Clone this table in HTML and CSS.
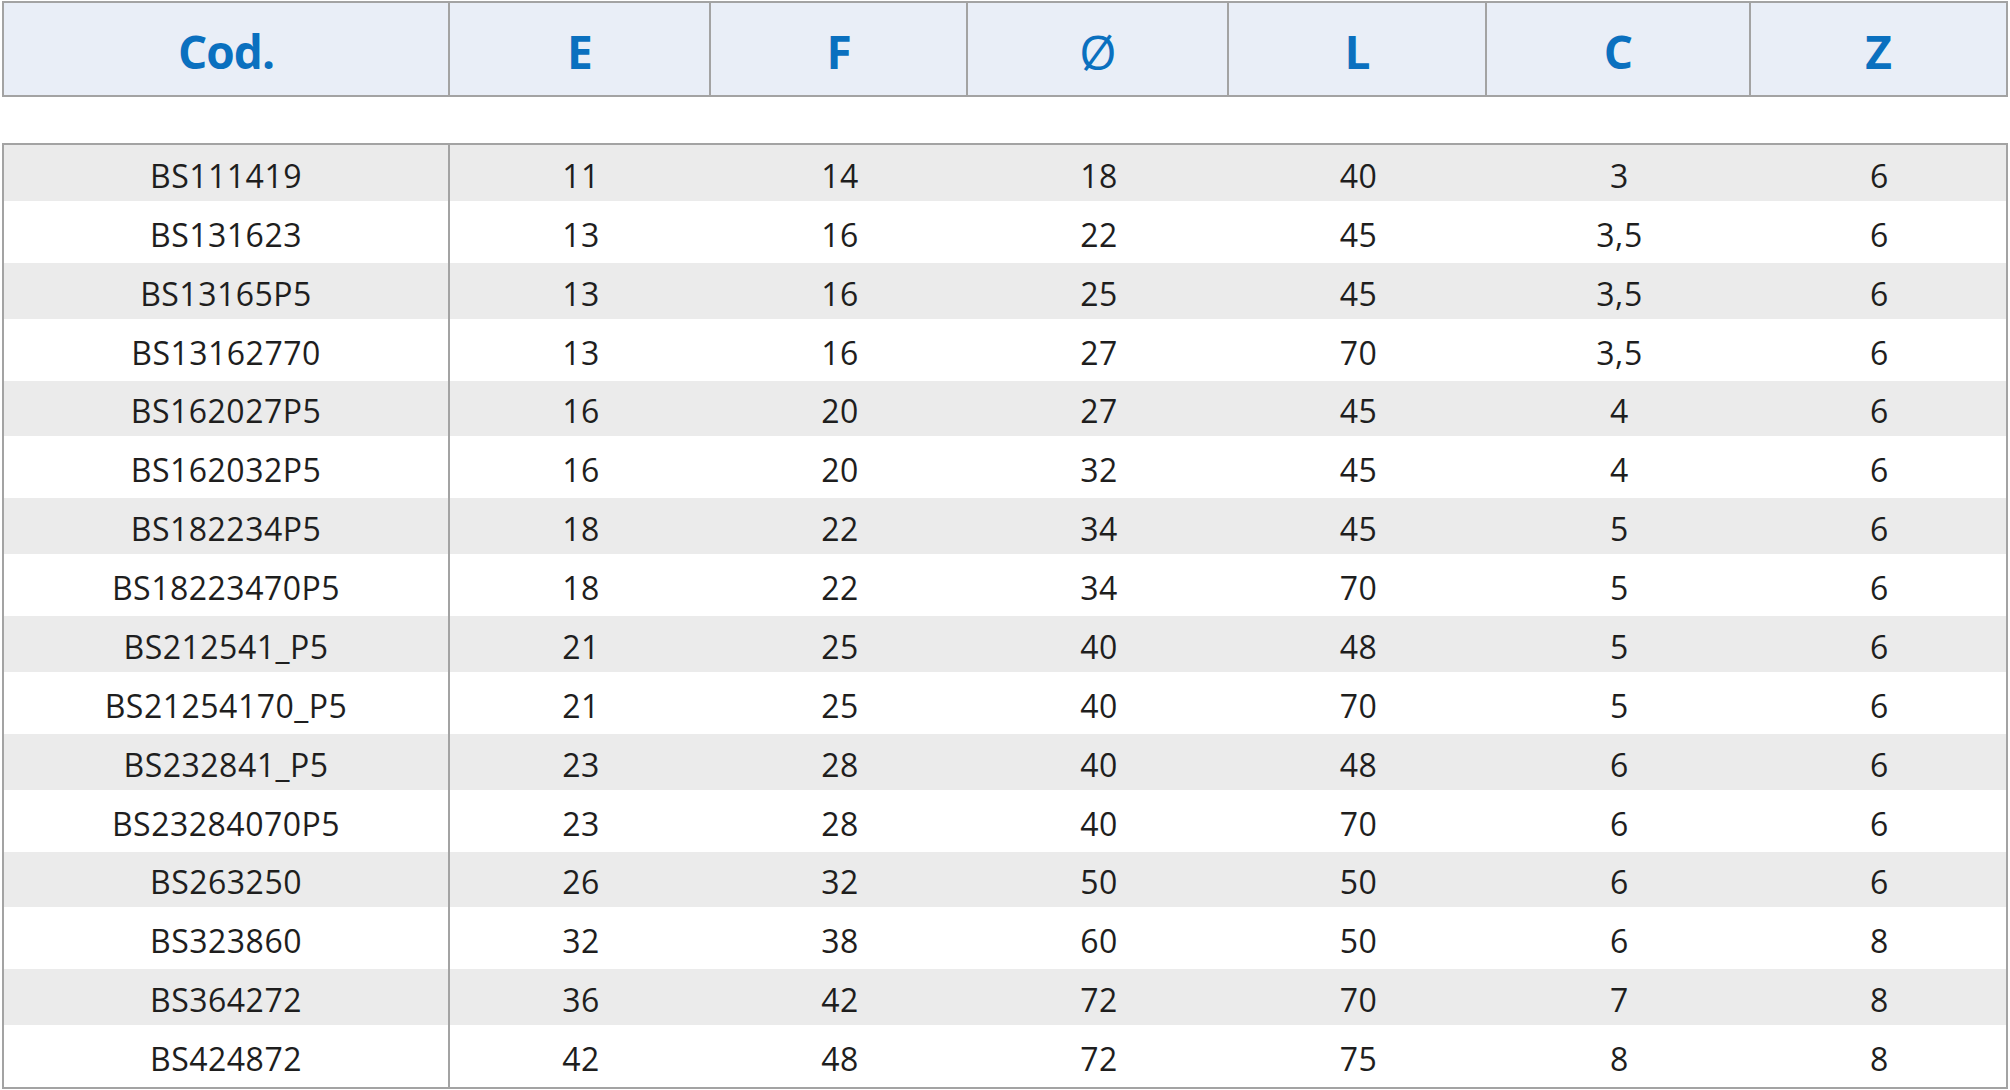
FILE: index.html
```html
<!DOCTYPE html>
<html lang="it">
<head>
<meta charset="utf-8">
<title>Tabella BS</title>
<link rel="stylesheet" href="styles.css">
</head>
<body>
<div class="page">
  <div class="head">
    <div class="hc">Cod.</div>
    <div class="hc">E</div>
    <div class="hc">F</div>
    <div class="hc hc-thin">Ø</div>
    <div class="hc">L</div>
    <div class="hc">C</div>
    <div class="hc">Z</div>
  </div>
  <div class="body">
    <div class="row alt"><div class="c code">BS111419</div><div class="c">11</div><div class="c">14</div><div class="c">18</div><div class="c">40</div><div class="c">3</div><div class="c">6</div></div>
    <div class="row"><div class="c code">BS131623</div><div class="c">13</div><div class="c">16</div><div class="c">22</div><div class="c">45</div><div class="c">3,5</div><div class="c">6</div></div>
    <div class="row alt"><div class="c code">BS13165P5</div><div class="c">13</div><div class="c">16</div><div class="c">25</div><div class="c">45</div><div class="c">3,5</div><div class="c">6</div></div>
    <div class="row"><div class="c code">BS13162770</div><div class="c">13</div><div class="c">16</div><div class="c">27</div><div class="c">70</div><div class="c">3,5</div><div class="c">6</div></div>
    <div class="row alt"><div class="c code">BS162027P5</div><div class="c">16</div><div class="c">20</div><div class="c">27</div><div class="c">45</div><div class="c">4</div><div class="c">6</div></div>
    <div class="row"><div class="c code">BS162032P5</div><div class="c">16</div><div class="c">20</div><div class="c">32</div><div class="c">45</div><div class="c">4</div><div class="c">6</div></div>
    <div class="row alt"><div class="c code">BS182234P5</div><div class="c">18</div><div class="c">22</div><div class="c">34</div><div class="c">45</div><div class="c">5</div><div class="c">6</div></div>
    <div class="row"><div class="c code">BS18223470P5</div><div class="c">18</div><div class="c">22</div><div class="c">34</div><div class="c">70</div><div class="c">5</div><div class="c">6</div></div>
    <div class="row alt"><div class="c code">BS212541_P5</div><div class="c">21</div><div class="c">25</div><div class="c">40</div><div class="c">48</div><div class="c">5</div><div class="c">6</div></div>
    <div class="row"><div class="c code">BS21254170_P5</div><div class="c">21</div><div class="c">25</div><div class="c">40</div><div class="c">70</div><div class="c">5</div><div class="c">6</div></div>
    <div class="row alt"><div class="c code">BS232841_P5</div><div class="c">23</div><div class="c">28</div><div class="c">40</div><div class="c">48</div><div class="c">6</div><div class="c">6</div></div>
    <div class="row"><div class="c code">BS23284070P5</div><div class="c">23</div><div class="c">28</div><div class="c">40</div><div class="c">70</div><div class="c">6</div><div class="c">6</div></div>
    <div class="row alt"><div class="c code">BS263250</div><div class="c">26</div><div class="c">32</div><div class="c">50</div><div class="c">50</div><div class="c">6</div><div class="c">6</div></div>
    <div class="row"><div class="c code">BS323860</div><div class="c">32</div><div class="c">38</div><div class="c">60</div><div class="c">50</div><div class="c">6</div><div class="c">8</div></div>
    <div class="row alt"><div class="c code">BS364272</div><div class="c">36</div><div class="c">42</div><div class="c">72</div><div class="c">70</div><div class="c">7</div><div class="c">8</div></div>
    <div class="row"><div class="c code">BS424872</div><div class="c">42</div><div class="c">48</div><div class="c">72</div><div class="c">75</div><div class="c">8</div><div class="c">8</div></div>
  </div>
</div>
</body>
</html>
```
FILE: styles.css
```css
html, body {
  margin: 0;
  padding: 0;
  background: #ffffff;
}

.page {
  padding: 1px 0 0 2px;
  width: 2006px;
  font-family: "Open Sans", "Liberation Sans", sans-serif;
}

.head,
.row {
  display: grid;
  grid-template-columns: 444px 261px 257px 261px 258px 264px 256px;
}

.head {
  border: 2px solid #a3a3a3;
  background: #e9eef7;
  height: 92px;
}

.hc {
  display: flex;
  align-items: center;
  justify-content: center;
  padding-top: 4px;
  border-left: 2px solid #a3a3a3;
  color: #0a70bf;
  font-weight: 700;
  font-size: 46px;
  letter-spacing: -1px;
}

.hc:first-child {
  border-left: none;
}

.hc-thin {
  font-weight: 400;
  font-size: 48px;
}

.body {
  margin-top: 46px;
  border: 2px solid #a3a3a3;
  height: 942px;
  display: grid;
  grid-auto-rows: 1fr;
}

.row.alt {
  background: linear-gradient(#ebebeb, #ebebeb) top left / 100% calc(100% - 3px) no-repeat;
}

.c {
  display: flex;
  align-items: center;
  justify-content: center;
  padding-left: 5px;
  padding-top: 2px;
  color: #1e1e1e;
  font-size: 32px;
  letter-spacing: 0.5px;
}

.c.code {
  padding-left: 0;
  border-right: 2px solid #a3a3a3;
  margin-right: -2px;
  position: relative;
}
```
